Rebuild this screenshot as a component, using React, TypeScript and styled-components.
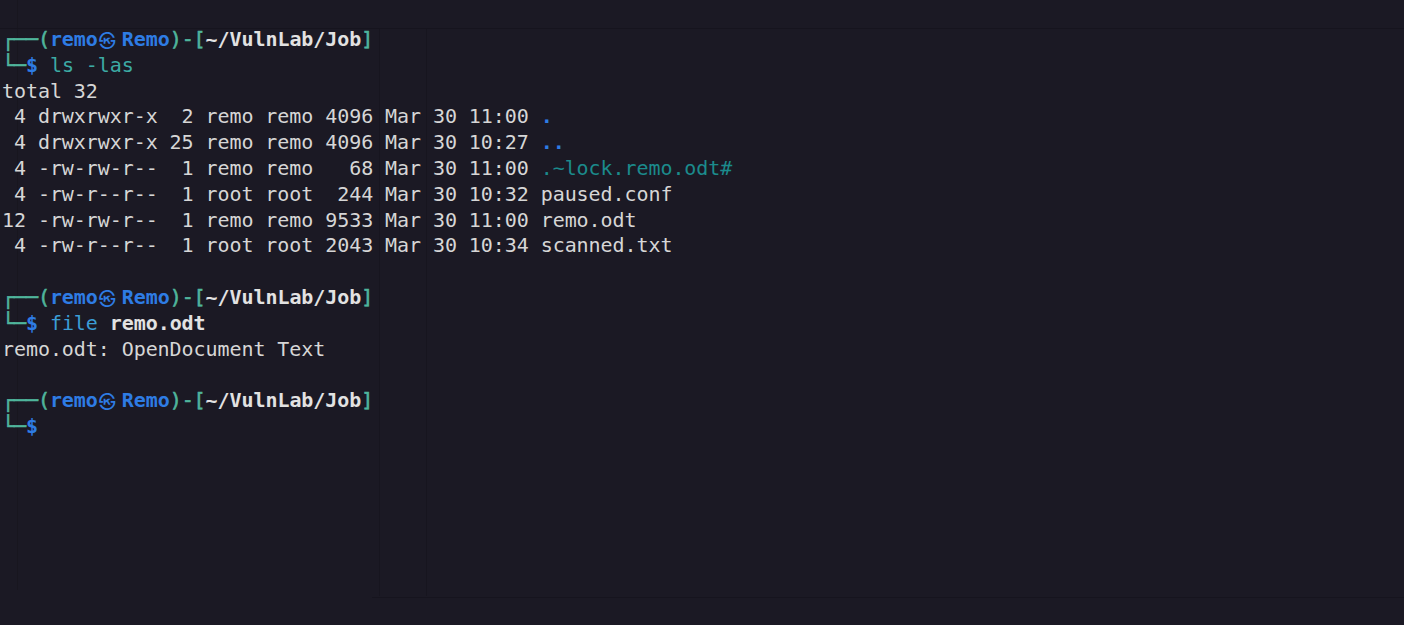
import React from "react";
import styled, { createGlobalStyle } from "styled-components";

const Global = createGlobalStyle`
  html, body { margin: 0; padding: 0; background: #1b1924; }
  body { width: 1404px; height: 625px; overflow: hidden; }
`;

const Screen = styled.div`
  width: 1404px;
  height: 625px;
  box-sizing: border-box;
  padding: 27px 0 0 2px;
  background-color: #1b1924;
  background-image:
    linear-gradient(#16141e, #16141e),
    linear-gradient(#17151f, #17151f),
    linear-gradient(#17151f, #17151f),
    linear-gradient(#16141e, #16141e),
    linear-gradient(#18161f, #18161f);
  background-repeat: no-repeat;
  background-size: 1404px 1px, 1px 568px, 1px 568px, 1032px 1px, 1px 590px;
  background-position: 0 28px, 379px 28px, 426px 28px, 372px 597px, 17px 0;
  font-family: "DejaVu Sans Mono", "Liberation Mono", monospace;
  font-size: 20px;
  letter-spacing: -0.07px;
  color: #d6d6d6;
`;

const Line = styled.div`
  height: 25.8px;
  line-height: 25.8px;
  white-space: pre;
`;

type Tone =
  | "user"
  | "path"
  | "dollar"
  | "cmd"
  | "cmd2"
  | "arg"
  | "dir"
  | "lock";

const tones: Record<Tone, { c: string; w: number }> = {
  user: { c: "#2e7ce4", w: 700 },
  path: { c: "#e2e2e2", w: 700 },
  dollar: { c: "#2e7ce4", w: 700 },
  cmd: { c: "#3caaa4", w: 400 },
  cmd2: { c: "#3b9ed6", w: 400 },
  arg: { c: "#e2e2e2", w: 700 },
  dir: { c: "#2e7ce4", w: 700 },
  lock: { c: "#1b8b8c", w: 400 },
};

const Seg = styled.span<{ $tone: Tone }>`
  color: ${(p) => tones[p.$tone].c};
  font-weight: ${(p) => tones[p.$tone].w};
`;

const Frame = styled.span`
  color: #4fb59c;
  -webkit-text-stroke: 0.6px #4fb59c;
`;

const Ksym = styled.span`
  display: inline-block;
  width: 24px;
  box-sizing: border-box;
  padding-left: 1px;
  text-align: left;
  color: #2e7ce4;
  font-family: "Noto Sans CJK KR", "Noto Sans CJK SC", sans-serif;
  font-size: 17px;
  font-weight: 700;
  line-height: 25.8px;
  vertical-align: top;
`;

const Prompt: React.FC = () => (
  <Line>
    <Frame>┌──(</Frame>
    <Seg $tone="user">remo</Seg>
    <Ksym>㉿</Ksym>
    <Seg $tone="user">Remo</Seg>
    <Frame>)-[</Frame>
    <Seg $tone="path">~/VulnLab/Job</Seg>
    <Frame>]</Frame>
  </Line>
);

const Command: React.FC<{ cmd?: string; arg?: string; tone?: Tone }> = ({
  cmd,
  arg,
  tone = "cmd",
}) => (
  <Line>
    <Frame>└─</Frame>
    <Seg $tone="dollar">$</Seg>
    {cmd ? <Seg $tone={tone}> {cmd}</Seg> : null}
    {arg ? <Seg $tone="arg"> {arg}</Seg> : null}
  </Line>
);

const rows: { meta: string; name: string; tone?: Tone }[] = [
  { meta: " 4 drwxrwxr-x  2 remo remo 4096 Mar 30 11:00 ", name: ".", tone: "dir" },
  { meta: " 4 drwxrwxr-x 25 remo remo 4096 Mar 30 10:27 ", name: "..", tone: "dir" },
  { meta: " 4 -rw-rw-r--  1 remo remo   68 Mar 30 11:00 ", name: ".~lock.remo.odt#", tone: "lock" },
  { meta: " 4 -rw-r--r--  1 root root  244 Mar 30 10:32 ", name: "paused.conf" },
  { meta: "12 -rw-rw-r--  1 remo remo 9533 Mar 30 11:00 ", name: "remo.odt" },
  { meta: " 4 -rw-r--r--  1 root root 2043 Mar 30 10:34 ", name: "scanned.txt" },
];

export default function App() {
  return (
    <>
      <Global />
      <Screen>
        <Prompt />
        <Command cmd="ls -las" />
        <Line>total 32</Line>
        {rows.map((r) => (
          <Line key={r.name}>
            {r.meta}
            {r.tone ? <Seg $tone={r.tone}>{r.name}</Seg> : r.name}
          </Line>
        ))}
        <Line> </Line>
        <Prompt />
        <Command cmd="file" arg="remo.odt" tone="cmd2" />
        <Line>remo.odt: OpenDocument Text</Line>
        <Line> </Line>
        <Prompt />
        <Command />
      </Screen>
    </>
  );
}
